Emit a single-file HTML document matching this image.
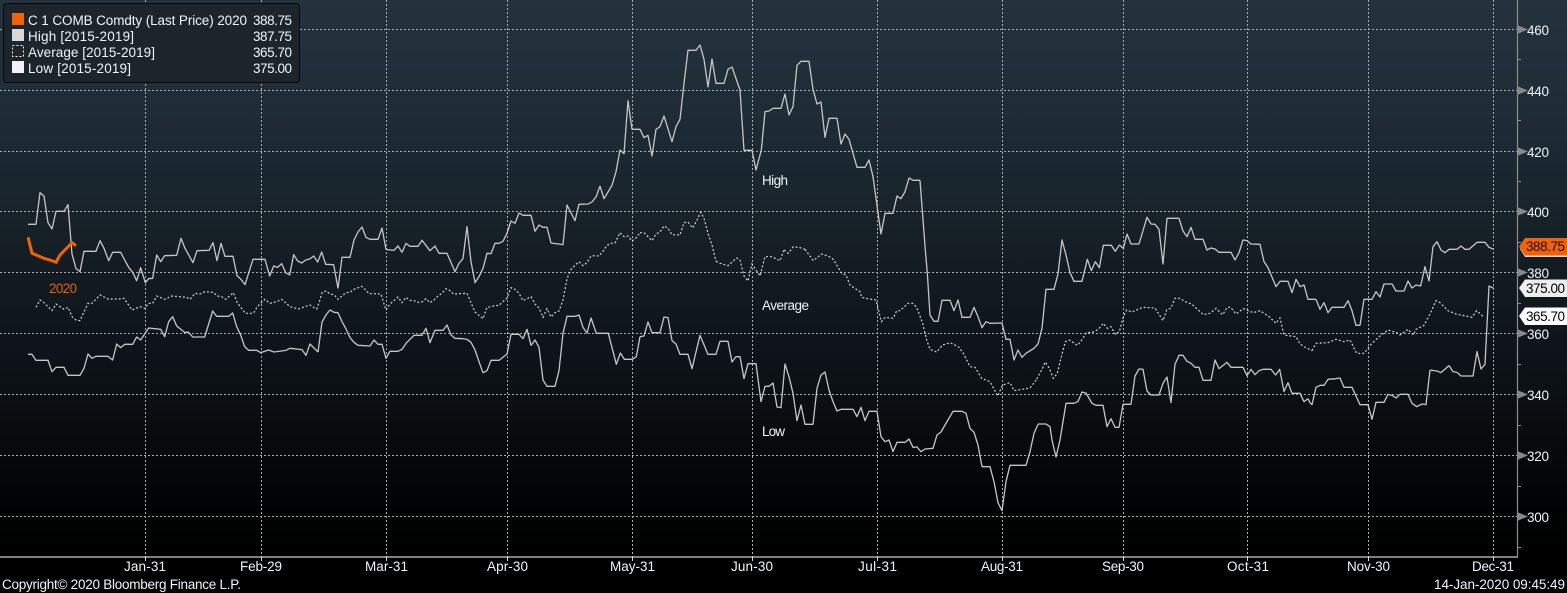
<!DOCTYPE html>
<html><head><meta charset="utf-8"><style>
html,body{margin:0;padding:0;background:#000;width:1567px;height:593px;overflow:hidden}
svg{display:block}
text{font-family:"Liberation Sans",sans-serif;font-size:13.5px;fill:#eef4fa}
.l polyline{fill:none;stroke:#c4c6c8;stroke-width:1.3;vector-effect:non-scaling-stroke;stroke-linejoin:round}
.a polyline{fill:none;stroke:#d0d2d4;stroke-width:1.2;stroke-dasharray:2 2;vector-effect:non-scaling-stroke}
.g line{stroke:#a9adb0;stroke-width:1;stroke-dasharray:2 2}
</style></head><body>
<svg width="1567" height="593" viewBox="0 0 1567 593" xmlns="http://www.w3.org/2000/svg">
<defs><linearGradient id="bg" x1="0" y1="0" x2="0" y2="1">
<stop offset="0" stop-color="#23323d"/><stop offset=".18" stop-color="#1f2d37"/><stop offset=".36" stop-color="#19242c"/><stop offset=".54" stop-color="#11181e"/><stop offset=".72" stop-color="#0a0f13"/><stop offset=".9" stop-color="#020304"/><stop offset="1" stop-color="#000"/>
</linearGradient></defs>
<rect width="1567" height="593" fill="#000"/>
<rect width="1567" height="557" fill="url(#bg)"/>
<g class="g">
<line x1="0" x2="1517" y1="29.5" y2="29.5"/><line x1="0" x2="1517" y1="90.5" y2="90.5"/><line x1="0" x2="1517" y1="151.5" y2="151.5"/><line x1="0" x2="1517" y1="211.5" y2="211.5"/><line x1="0" x2="1517" y1="272.5" y2="272.5"/><line x1="0" x2="1517" y1="333.5" y2="333.5"/><line x1="0" x2="1517" y1="394.5" y2="394.5"/><line x1="0" x2="1517" y1="455.5" y2="455.5"/><line x1="0" x2="1517" y1="516.5" y2="516.5"/>
<line x1="145.5" x2="145.5" y1="0" y2="557"/><line x1="261.5" x2="261.5" y1="0" y2="557"/><line x1="386.5" x2="386.5" y1="0" y2="557"/><line x1="507.5" x2="507.5" y1="0" y2="557"/><line x1="632.5" x2="632.5" y1="0" y2="557"/><line x1="752.5" x2="752.5" y1="0" y2="557"/><line x1="877.5" x2="877.5" y1="0" y2="557"/><line x1="1002.5" x2="1002.5" y1="0" y2="557"/><line x1="1123.5" x2="1123.5" y1="0" y2="557"/><line x1="1247.5" x2="1247.5" y1="0" y2="557"/><line x1="1368.5" x2="1368.5" y1="0" y2="557"/><line x1="1493.5" x2="1493.5" y1="0" y2="557"/>
</g>
<g stroke="#cfd3d6" stroke-width="1"><path d="M145.5 557v4M261.5 557v4M386.5 557v4M507.5 557v4M632.5 557v4M752.5 557v4M877.5 557v4M1002.5 557v4M1123.5 557v4M1247.5 557v4M1368.5 557v4M1493.5 557v4" fill="none"/></g>
<g class="l">
<polyline transform="translate(0 180) scale(.33333)" points="84,133 108,133 120,38 132,48 144,128 156,147 168,94 192,94 204,74 216,222 228,266 240,275 252,214 288,214 300,182 312,205 326,242 338,217 362,217 374,240 386,262 398,277 410,302 422,263 436,308 446,296 458,295 470,225 482,245 494,227 530,226 543,175 555,205 579,248 591,212 627,211 639,188 651,242 663,190 675,229 699,229 711,287 723,298 735,314 759,238 795,238 809,288 821,258 833,262 845,251 857,278 869,285 881,224 893,243 905,249 917,240 929,237 941,228 953,246 965,216 977,253 1001,254 1014,325"/>
<polyline transform="translate(320 180) scale(.33333)" points="54,325 66,232 90,232 102,180 114,156 126,141 138,172 150,178 174,178 186,144 198,208 222,211 234,198 246,217 258,190 270,199 294,199 306,181 330,212 345,198 357,220 381,220 405,275 417,250 429,236 441,140 453,245 465,308 477,290 489,265 501,220 513,221 525,190 537,190 549,184 561,160 573,123 585,130 597,99 609,106 633,106 645,154 657,135 669,142 681,142 693,189 729,194 741,75 765,122 777,73 805,72 817,65 829,49 840,18"/>
<polyline transform="translate(600 30) scale(.33333)" points="0,468 12,506 24,486 36,466 48,425 60,360 72,371 84,212 96,298 120,298 132,323 144,316 156,378 168,298 180,290 192,258 216,335 228,290 240,268 252,160 264,61 288,61 300,45 312,88 324,171 336,87 348,160 372,160 384,118 396,111 420,180 432,361 456,361 468,420 484,360 495,245 507,243 519,235 543,235 555,192 567,255 579,230 591,106 603,94 627,94 639,178 651,222 663,216 675,322 687,265 711,265 723,342 735,312 747,328 771,412 795,412 807,390 819,440 843,612 855,550 879,550 891,498 903,506 915,485 927,444 939,451 960,451"/>
<polyline transform="translate(640 250) scale(.33333)" points="840,-209 856,0 862,70 870,195 882,214 894,214 906,151 930,151 942,182 954,150 966,202 990,202 1002,172 1014,200 1026,233 1038,215 1050,220 1086,219 1098,268 1110,268 1122,330 1134,300 1146,322 1158,310 1182,295 1194,282"/>
<polyline transform="translate(1000 200) scale(.33333)" points="114,432 126,385 138,268 162,268 174,222 186,120 198,165 210,218 222,244 246,244 262,178 274,212 286,185 298,203 310,136 334,136 346,154 358,135 370,145 381,102 393,132 417,132 441,52 453,72 465,73 477,88 489,192 501,55 537,55 549,93 561,110 573,82 585,118 609,118 621,150 633,144 645,147 657,157 693,157 705,180 717,158 729,120 741,122 753,132 780,133 792,185 804,203 828,260 840,244 864,244 876,278 888,238 900,260 912,255 924,298 948,298"/>
<polyline transform="translate(1300 200) scale(.33333)" points="48,298 60,328 72,308 84,338 96,322 132,322 144,302 156,332 168,376 180,376 192,298 216,298 228,275 240,291 252,252 276,252 288,273 312,273 324,243 336,264 348,255 362,258 375,200 387,243 399,140 411,125 423,150 435,158 447,148 471,148 483,138 495,148 507,148 531,127 555,127 567,142 581,148"/>
<!-- Low -->
<polyline transform="translate(0 180) scale(.33333)" points="84,523 96,523 108,541 144,541 156,575 168,562 192,562 204,586 240,586 252,565 264,522 276,535 288,529 324,529 338,540 350,492 362,503 374,493 398,493 410,471 422,480 446,444 482,448 494,470 506,425 518,410 530,438 554,457 566,457 578,471 614,471 638,393 650,409 686,409 698,399 710,440 722,465 734,500 746,511 770,511 782,518 806,510 822,516 858,511 870,505 906,509 918,526 930,492 954,516"/>
<polyline transform="translate(320 180) scale(.33333)" points="-6,516 6,426 18,405 30,390 42,397 54,398 66,425 78,447 90,473 102,487 114,496 150,498 162,480 174,493 186,493 198,535 210,514 234,514 246,508 258,490 270,478 282,466 306,466 318,445 330,488 345,451 369,451 381,435 393,465 405,475 429,476 441,478 453,487 465,510 477,545 489,578 501,572 513,541 537,541 561,522 573,463 597,463 609,476 621,448 633,496 645,480 657,502 669,600 681,619 705,619 717,572 729,460 741,409 765,409 777,405 789,442 801,459 813,414 829,460 865,460 889,553 901,519 913,538 937,538 949,530 960,470"/>
<polyline transform="translate(640 250) scale(.33333)" points="0,260 12,258 24,216 36,248 60,248 72,201 84,203 96,272 108,282 120,313 144,313 156,356 180,256 204,313 228,313 240,274 264,274 276,336 288,320 300,320 312,386 324,341 348,341 363,455 375,409 387,409 399,399 411,471 423,473 435,342 447,380 459,430 471,512 483,465 495,523 519,523 531,415 543,375 555,366 567,420 579,455 591,483 603,478 639,478 651,500 663,472 675,512 687,484 711,484 723,560 735,575 747,570 759,605 771,577 795,577 807,567 819,592 831,591 843,605 855,597 879,595 891,555 903,546 915,525 939,484 966,484 978,490 990,535 1002,547 1014,585 1026,650 1050,650 1062,695 1074,758 1086,782 1098,695 1110,646 1158,646 1170,605 1182,550 1194,523"/>
<polyline transform="translate(1000 200) scale(.33333)" points="114,672 138,672 150,680 156,720 168,771 180,720 198,610 222,610 234,604 246,576 258,579 276,610 288,616 309,616 321,680 333,656 345,682 357,682 369,613 393,613 405,528 417,507 429,508 441,573 453,585 477,585 489,550 501,531 513,608 525,493 537,466 549,466 561,484 573,490 585,502 597,502 609,541 633,541 645,480 657,506 681,487 693,502 729,502 741,527 753,508 765,524 777,512 789,508 813,508 827,525 839,508 852,575 864,548 876,580 900,580 912,605 924,596"/>
<polyline transform="translate(1310 370) scale(.33333)" points="-6,86 0,98 6,104 18,52 30,46 42,46 54,28 78,26 90,24 102,52 126,52 150,104 174,104 186,148 198,97 222,97 234,73 246,76 258,84 270,73 294,73 306,100 320,110 336,102 348,104 360,0"/>
<polyline transform="translate(1300 200) scale(.33333)" points="390,510 411,513 423,518 447,497 459,515 471,517 483,528 519,528 531,455 543,507 555,493 567,258 581,265"/>
</g>
<g class="a">
<polyline transform="translate(0 180) scale(.33333)" points="108,382 120,360 132,368 156,392 168,372 192,388 204,382 216,410 228,420 240,422 264,370 276,370 300,345 324,357 360,357 372,355 396,390 420,380 436,385 445,370 458,370 470,348 495,358 515,348 560,352 570,358 585,340 600,342 615,335 640,337 652,348 665,350 677,358 700,338 712,368 736,400 760,400 772,380 784,368 795,358 810,370 830,365 845,358 870,380 895,387 930,375 950,388"/>
<polyline transform="translate(320 180) scale(.33333)" points="-10,388 0,360 6,338 18,333 30,342 42,344 54,358 66,348 78,338 90,337 102,328 125,319 135,328 147,341 159,341 183,342 198,390 210,372 234,351 246,368 258,352 270,361 282,362 294,367 306,366 318,356 330,368 342,360 354,348 366,340 378,326 390,332 402,343 414,341 441,340 453,368 465,396 489,416 501,382 513,380 525,377 537,376 561,354 573,323 585,328 597,340 609,362 633,350 645,372 657,384 669,412 681,386 693,411 705,398 717,393 729,360 741,296 753,268 765,256 777,245 789,257 801,248 813,228 825,227 837,228 849,214 861,196 873,190 885,189 900,158 912,170 924,168 936,183 948,174 960,158"/>
<polyline transform="translate(600 30) scale(.33333)" points="120,608 132,608 156,632 168,612 180,606 192,588 204,595 216,614 240,615 252,578 264,576 278,594 290,572 302,547 312,565 324,610 336,645 348,694"/>
<polyline transform="translate(640 250) scale(.33333)" points="228,34 240,40 264,47 290,24 300,30 312,78 324,93 336,42 360,78 375,20 395,20 420,32 432,0"/>
<polyline transform="translate(600 30) scale(.33333)" points="552,660 565,670 580,650 600,653 615,658"/>
<polyline transform="translate(640 250) scale(.33333)" points="495,-2 520,32 545,12 568,20 580,28 605,70 618,75 630,105 640,112 660,125 665,142 688,147 708,150 724,215 736,202 760,205 770,182 780,182 804,160 818,160 830,172 848,220 860,270 870,298 890,306 908,285 930,278 955,290 970,310 990,350 1005,352 1025,385 1050,395 1073,438 1088,405 1110,398 1122,422 1170,414 1190,388"/>
<polyline transform="translate(1000 200) scale(.33333)" points="110,537 125,510 136,486 148,505 160,535 172,520 184,470 196,425 208,420 232,436 244,422 260,397 275,398 295,388 310,370 322,385 333,380 346,403 358,395 370,350 380,330 396,336 428,322 465,324 489,362 500,330 513,324 525,295 540,295 555,305 575,312 610,344 630,340 648,325 668,344 682,322 692,322 708,342 730,326 760,338 780,332 810,352 828,370 840,354 852,405 888,410 900,432 912,440 936,452"/>
<polyline transform="translate(1300 200) scale(.33333)" points="36,452 48,430 84,428 108,418 132,425 150,420 170,460 192,460 216,430 240,408 264,390 290,398 300,405 324,388 340,405 348,388 372,376 390,342 408,302 420,308 444,332 468,342 516,352 530,332 550,350"/>
</g>
<polyline points="28,237.3 32,253.3 44,258.3 50,260 56,262.3 60,255 72,242.7 76,245.7" fill="none" stroke="#f26200" stroke-width="3"/>
<text x="49" y="293" textLength="28" style="fill:#e8600f">2020</text>
<text x="762" y="185" textLength="26">High</text>
<text x="762" y="310" textLength="47">Average</text>
<text x="762" y="436" textLength="23">Low</text>
<!-- Legend -->
<rect x="3.5" y="3.5" width="296" height="79" rx="3" fill="#1c252c" stroke="#050708"/>
<rect x="12" y="13" width="12" height="12" fill="#f26200"/>
<rect x="12" y="29" width="12" height="12" fill="#d8d8d8"/>
<rect x="12.5" y="45.5" width="11" height="11" fill="none" stroke="#fff" stroke-dasharray="2 2"/>
<rect x="12" y="61" width="12" height="12" fill="#f2f2f2"/>
<text x="28" y="25" textLength="219">C 1 COMB Comdty (Last Price) 2020</text>
<text x="253" y="25" textLength="39">388.75</text>
<text x="28" y="41" textLength="106">High [2015-2019]</text>
<text x="253" y="41" textLength="39">387.75</text>
<text x="28" y="57" textLength="127">Average [2015-2019]</text>
<text x="253" y="57" textLength="39">365.70</text>
<text x="28" y="73" textLength="103">Low [2015-2019]</text>
<text x="253" y="73" textLength="39">375.00</text>
<!-- Axes -->
<line x1="0" x2="1518" y1="557" y2="557" stroke="#fff" stroke-width="1"/>
<line x1="1517.5" x2="1517.5" y1="0" y2="557" stroke="#8a8e91" stroke-width="1.2"/>
<g fill="#85898c">
<path d="M1517 25l11 4.5-11 4.5zM1517 86l11 4.5-11 4.5zM1517 147l11 4.5-11 4.5zM1517 207l11 4.5-11 4.5zM1517 268l11 4.5-11 4.5zM1517 329l11 4.5-11 4.5zM1517 390l11 4.5-11 4.5zM1517 451l11 4.5-11 4.5zM1517 512l11 4.5-11 4.5z"/>
</g>
<path d="M1517 59.5h4M1517 120.5h4M1517 181.5h4M1517 242.5h4M1517 303.5h4M1517 364.5h4M1517 425.5h4M1517 486.5h4M1517 547.5h4" stroke="#8a8e91" fill="none"/>
<text x="1527" y="35" textLength="22">460</text><text x="1527" y="96" textLength="22">440</text><text x="1527" y="157" textLength="22">420</text><text x="1527" y="217" textLength="22">400</text><text x="1527" y="278" textLength="22">380</text><text x="1527" y="339" textLength="22">360</text><text x="1527" y="400" textLength="22">340</text><text x="1527" y="461" textLength="22">320</text><text x="1527" y="522" textLength="22">300</text>
<!-- Tags -->
<path d="M1525 239h42v18h-42l-5-8z" fill="#d8d8d8"/>
<path d="M1525 238h42v17.500h-42l-6-9z" fill="#f26200"/>
<text x="1526" y="251" textLength="39" style="fill:#1a0a00">388.75</text>
<path d="M1525 279.500h42v17.500h-42l-6-9z" fill="#eeeeee"/>
<text x="1526" y="293" textLength="39" style="fill:#000">375.00</text>
<path d="M1525 307.500h42v17.500h-42l-6-9z" fill="#fff"/>
<text x="1526" y="321" textLength="39" style="fill:#000">365.70</text>
<!-- X labels -->
<text x="124" y="571" textLength="42">Jan-31</text><text x="240" y="571" textLength="42">Feb-29</text><text x="365" y="571" textLength="43">Mar-31</text><text x="487" y="571" textLength="41">Apr-30</text><text x="610" y="571" textLength="45">May-31</text><text x="731" y="571" textLength="42">Jun-30</text><text x="858" y="571" textLength="39">Jul-31</text><text x="981" y="571" textLength="42">Aug-31</text><text x="1102" y="571" textLength="42">Sep-30</text><text x="1227" y="571" textLength="42">Oct-31</text><text x="1347" y="571" textLength="43">Nov-30</text><text x="1472" y="571" textLength="42">Dec-31</text>
<text x="2" y="589" textLength="239">Copyright© 2020 Bloomberg Finance L.P.</text>
<text x="1434" y="589" textLength="131">14-Jan-2020 09:45:49</text>
</svg>
</body></html>
